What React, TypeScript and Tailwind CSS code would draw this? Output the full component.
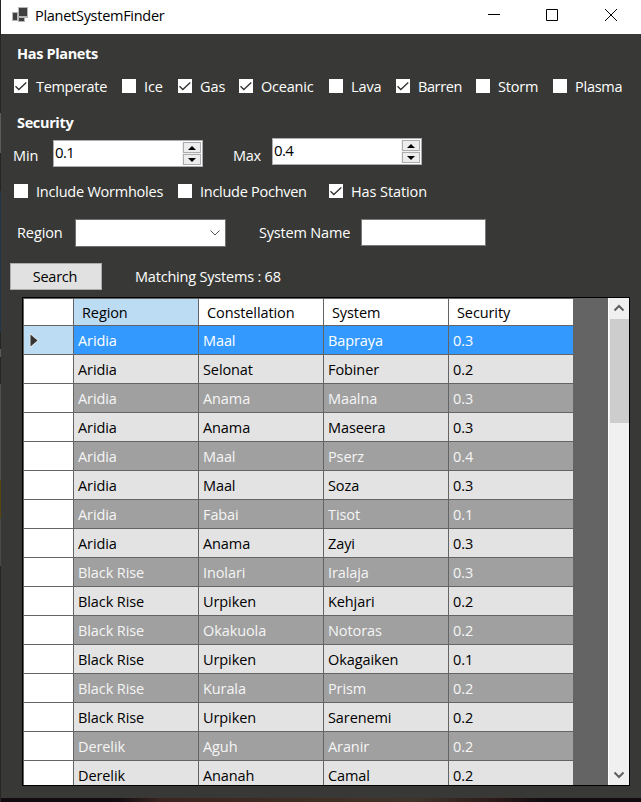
import React from "react";

function Check({ label, on = false, className = "", text = "" }: { label: string; on?: boolean; className?: string; text?: string }) {
  return (
    <label className={`flex h-5 shrink-0 items-center ${className}`}>
      <span className="flex h-[14px] w-[14px] shrink-0 bg-white">
        {on && (
          <svg width="14" height="14" viewBox="0 0 14 14" fill="none" stroke="#303030" strokeWidth="1.3">
            <path d="M1.500 7.200 4.800 10.500 12.300 3.500" />
          </svg>
        )}
      </span>
      <span className={`ml-2 mt-0.5 whitespace-nowrap ${text}`}>{label}</span>
    </label>
  );
}

function Spin({ value, className = "" }: { value: string; className?: string }) {
  return (
    <div className={`flex h-[27px] w-[150px] shrink-0 justify-between border border-[#abadb3] bg-white text-black ${className}`}>
      <span className="ml-[1px] text-[15px] leading-[23px] tracking-[-0.6px]">{value}</span>
      <div className="mr-px mt-px flex h-[23px] w-[19px] flex-col gap-px bg-[#f0f0f0]">
        {["M2 7h8L6 3z", "M2 3h8L6 7z"].map((d) => (
          <span key={d} className="ml-px flex h-[11px] w-[18px] items-center justify-center border border-[#acacac] bg-[#ededed]">
            <svg width="12" height="9" viewBox="0 0 12 9" className="shrink-0">
              <path d={d} fill="#000" />
            </svg>
          </span>
        ))}
      </div>
    </div>
  );
}

const rows = [
  ["Aridia", "Maal", "Bapraya", "0.3"],
  ["Aridia", "Selonat", "Fobiner", "0.2"],
  ["Aridia", "Anama", "Maalna", "0.3"],
  ["Aridia", "Anama", "Maseera", "0.3"],
  ["Aridia", "Maal", "Pserz", "0.4"],
  ["Aridia", "Maal", "Soza", "0.3"],
  ["Aridia", "Fabai", "Tisot", "0.1"],
  ["Aridia", "Anama", "Zayi", "0.3"],
  ["Black Rise", "Inolari", "Iralaja", "0.3"],
  ["Black Rise", "Urpiken", "Kehjari", "0.2"],
  ["Black Rise", "Okakuola", "Notoras", "0.2"],
  ["Black Rise", "Urpiken", "Okagaiken", "0.1"],
  ["Black Rise", "Kurala", "Prism", "0.2"],
  ["Black Rise", "Urpiken", "Sarenemi", "0.2"],
  ["Derelik", "Aguh", "Aranir", "0.2"],
  ["Derelik", "Ananah", "Camal", "0.2"],
];

export default function App() {
  return (
    <div className="flex h-[802px] w-[641px] overflow-hidden bg-[#383936] font-['Open_Sans','Noto_Sans',sans-serif] text-[14.5px] leading-5 tracking-[-0.1px] text-white">
      <div className="flex w-px shrink-0 flex-col bg-[#242625]">
        <div className="mt-[113px] h-[40px] bg-[#5a5c5b]" />
        <div className="mt-[38px] h-[141px] bg-[#26344a]" />
        <div className="mt-[17px] h-[8px] bg-[#5a5c5b]" />
        <div className="mt-[27px] h-[96px] bg-[#505251]" />
        <div className="h-[38px] bg-[#574510]" />
        <div className="h-[48px] bg-[#484a49]" />
      </div>
      <div className="flex w-[640px] shrink-0 flex-col">
        <header className="flex h-[34px] shrink-0 bg-white text-black">
          <svg width="16" height="15" viewBox="0 0 16 15" className="ml-[11px] mt-[7px]">
            <path d="M0 5h6v9H0z" fill="#b5b5b5" />
            <path d="M6 0h10v11H6z" fill="#b5b5b5" />
            <path d="M6 11h7v4H6z" fill="#b5b5b5" />
            <path d="M1 6h4v7H1zM7 1h8v8H7zM7 11h5v3H7z" fill="#404040" />
          </svg>
          <span className="ml-[7px] mt-[6px] tracking-[-0.28px]">PlanetSystemFinder</span>
          <svg width="130" height="14" viewBox="0 0 130 14" fill="none" stroke="#000" className="ml-auto mr-[23px] mt-[8px]">
            <path d="M0 6.500h12M58.500 1.500h11v11h-11zM117 1l12 12M129 1l-12 12" />
          </svg>
        </header>
        <h2 className="ml-4 mt-[10px] h-5 shrink-0 font-bold tracking-[-0.35px]">Has Planets</h2>
        <div className="mt-[12px] flex shrink-0 pl-[13px]">
          <Check label="Temperate" on className="w-[108px]" text="tracking-[-0.32px]" />
          <Check label="Ice" className="w-[56px]" />
          <Check label="Gas" on className="w-[61px]" />
          <Check label="Oceanic" on className="w-[90px]" text="tracking-[-0.2px]" />
          <Check label="Lava" className="w-[67px]" />
          <Check label="Barren" on className="w-[80px]" text="tracking-[-0.4px]" />
          <Check label="Storm" className="w-[77px]" text="tracking-[-0.2px]" />
          <Check label="Plasma" text="tracking-[-0.25px]" />
        </div>
        <h2 className="ml-4 mt-[17px] h-5 shrink-0 font-bold tracking-[-0.35px]">Security</h2>
        <div className="mt-[5px] flex h-[30px] shrink-0 pl-3">
          <span className="mt-[8px] w-[40px]">Min</span>
          <Spin value="0.1" className="mt-[2px]" />
          <span className="ml-[30px] mt-[8px] w-[39px] tracking-[-0.3px]">Max</span>
          <Spin value="0.4" />
        </div>
        <div className="mt-[13px] flex shrink-0 pl-[13px]">
          <Check label="Include Wormholes" className="w-[164px]" text="tracking-[-0.23px]" />
          <Check label="Include Pochven" className="w-[151px]" text="tracking-[-0.27px]" />
          <Check label="Has Station" on />
        </div>
        <div className="mt-[18px] flex h-[28px] shrink-0 pl-4">
          <span className="mt-[4px] w-[58px]">Region</span>
          <div className="flex h-[28px] w-[151px] items-center justify-end border border-[#707070] bg-white pr-[5px]">
            <svg width="10" height="6" viewBox="0 0 10 6" fill="none" stroke="#505050">
              <path d="M.5.5 5 5 9.500.5" />
            </svg>
          </div>
          <span className="ml-[33px] mt-[4px] w-[102px] tracking-[-0.18px]">System Name</span>
          <div className="h-[27px] w-[125px] border border-[#7a7a7a] bg-white" />
        </div>
        <div className="mt-[16px] flex h-[27px] shrink-0 pl-[9px]">
          <button className="h-[27px] w-[92px] border border-[#adadad] bg-[#e1e1e1] pr-[2px] tracking-[-0.25px] text-black">Search</button>
          <span className="ml-[33px] mt-[4px] tracking-[-0.2px]">Matching Systems : 68</span>
        </div>
        <main className="ml-[21px] mt-[7px] flex h-[489px] w-[608px] shrink-0 overflow-hidden border border-black bg-[#646464]">
          <div className="flex w-[550px] shrink-0 flex-col pl-px pt-px text-black">
            <div className="flex h-[27px] shrink-0 border-b border-[#646464]">
              <div className="w-[50px] shrink-0 border-r border-[#646464] bg-white" />
              {["Region", "Constellation", "System", "Security"].map((h, i) => (
                <div key={h} className={`shrink-0 pl-2 leading-[27px] ${i < 3 ? "w-[125px] border-r border-[#646464]" : "w-[124px]"} ${i === 0 ? "bg-[#bcdcf4]" : "bg-white"}`}>
                  {h}
                </div>
              ))}
            </div>
            {rows.map((r, n) => (
              <div key={n} className={`flex h-[29px] shrink-0 border-b border-[#646464] ${n === 0 ? "text-white" : n % 2 === 0 ? "text-[#f5f5f5]" : ""}`}>
                <div className={`flex w-[50px] shrink-0 items-center border-r border-[#646464] pl-[5px] ${n === 0 ? "bg-[#bcdcf4]" : "bg-white"}`}>
                  {n === 0 && (
                    <svg width="10" height="15" viewBox="0 0 10 15" className="mt-px">
                      <path d="M1.500 1.500v12L8.500 7.500z" fill="#333" stroke="#e8e8e8" strokeWidth="1.600" paintOrder="stroke" />
                    </svg>
                  )}
                </div>
                {r.map((c, i) => (
                  <div
                    key={i}
                    className={`shrink-0 pl-1 leading-[29px] ${i < 3 ? "w-[125px] border-r border-[#646464]" : "w-[124px]"} ${n === 0 ? "bg-[#3399ff]" : n % 2 === 0 ? "bg-[#a0a0a0]" : "bg-[#e3e3e3]"}`}
                  >
                    {c}
                  </div>
                ))}
              </div>
            ))}
          </div>
          <div className="ml-auto flex w-[21px] flex-col items-center border-l border-white bg-[#f0f0f0]">
            <svg width="12" height="8" viewBox="0 0 12 8" fill="none" stroke="#606060" strokeWidth="2" className="mt-[6px] shrink-0">
              <path d="M1.500 6.500 6 2 10.500 6.500" />
            </svg>
            <div className="mt-[7px] h-[104px] w-[19px] shrink-0 bg-[#cdcdcd]" />
            <svg width="12" height="8" viewBox="0 0 12 8" fill="none" stroke="#606060" strokeWidth="2" className="mb-[6px] mt-auto shrink-0">
              <path d="M1.500 1.500 6 6 10.500 1.500" />
            </svg>
          </div>
        </main>
        <footer className="mt-auto h-[4px] shrink-0 bg-[linear-gradient(90deg,#120c10_0%,#120c10_18%,#3a2420_25%,#402e22_50%,#40332a_65%,#2a1818_78%,#120c10_84%)]" />
      </div>
    </div>
  );
}
